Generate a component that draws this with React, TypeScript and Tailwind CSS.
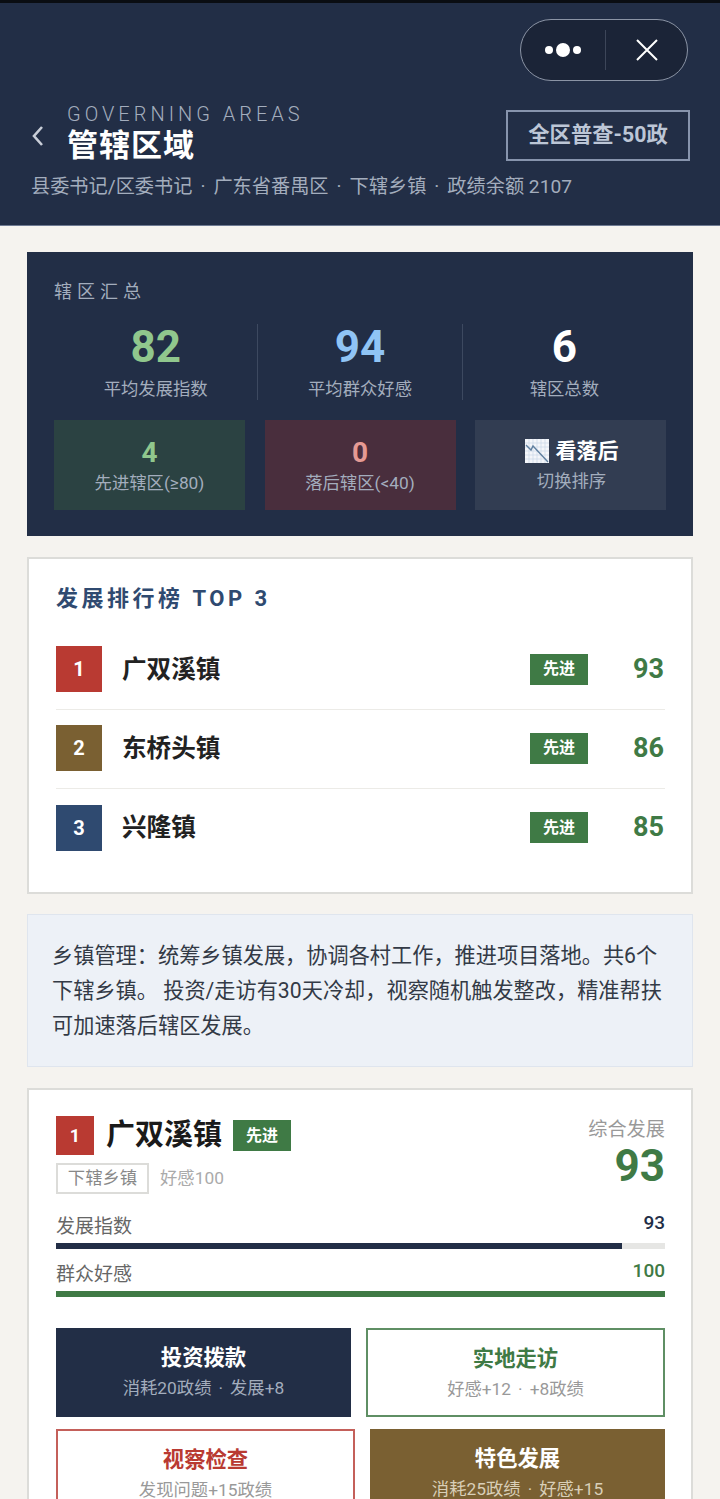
const cjk = "font-['Roboto','Noto_Sans_CJK_SC',sans-serif]";

function Tag() {
  return (
    <span className="flex h-[31px] w-[58px] items-center justify-center bg-[#3f7a45] text-[16px] font-bold text-white">
      先进
    </span>
  );
}

function Sep({ small }: { small?: boolean }) {
  return <span className={small ? "mx-[7px]" : "mx-[8px]"}>·</span>;
}

function RankRow({ n, name, score, color, last }: { n: number; name: string; score: number; color: string; last?: boolean }) {
  return (
    <div className={last ? "flex h-[79px] items-center pb-[2px]" : "flex h-[79px] items-center border-b border-[#ecebe7] pb-[2px]"}>
      <span className={`flex h-[46px] w-[46px] items-center justify-center text-[20px] font-bold text-white ${color}`}>{n}</span>
      <span className="ml-[20px] mt-[2px] flex-1 text-[24.6px] font-bold leading-none text-[#222]">{name}</span>
      <Tag />
      <span className="w-[77px] pr-[1px] text-right text-[27px] font-bold leading-none text-[#3f7a45]">{score}</span>
    </div>
  );
}

function Stat({ value, label, color, border }: { value: number; label: string; color: string; border?: boolean }) {
  return (
    <div className={border ? "flex h-[76px] flex-1 flex-col items-center border-r border-[#3d4960]" : "flex h-[76px] flex-1 flex-col items-center"}>
      <span className={`text-[44px] font-bold leading-[46px] ${color}`}>{value}</span>
      <span className="mt-[7px] text-[17.33px] leading-[24px] text-[#a3adbd]">{label}</span>
    </div>
  );
}

function Bar({ label, value, pct, bar, text }: { label: string; value: number; pct: string; bar: string; text: string }) {
  return (
    <div>
      <div className="flex h-[32px] items-center justify-between">
        <span className="mt-[2px] text-[19px] leading-none text-[#666]">{label}</span>
        <span className={`mb-[6px] text-[19px] font-medium leading-none ${text}`}>{value}</span>
      </div>
      <div className="mt-[2px] h-[6px] bg-[#e6e6e4]">
        <div className={`h-full ${bar} ${pct}`} />
      </div>
    </div>
  );
}

function Action({ title, sub, box, titleColor, subColor }: { title: string; sub: React.ReactNode; box: string; titleColor: string; subColor: string }) {
  return (
    <div className={`flex flex-col items-center justify-center ${box}`}>
      <span className={`text-[21.33px] font-bold leading-[28px] ${titleColor}`}>{title}</span>
      <span className={`mt-[4px] text-[17.33px] leading-[24px] ${subColor}`}>{sub}</span>
    </div>
  );
}

export default function App() {
  return (
    <div className={`h-[1499px] w-[720px] overflow-hidden bg-[#f5f3ef] ${cjk}`}>
      <header className="h-[226px] border-t-[3px] border-t-[#0a0d12] border-b border-b-[#6e7a92] bg-[#222e46] pr-[30px] pl-[32px] pt-[16px]">
        <div className="flex justify-end">
          <div className="mr-[2px] flex h-[62px] w-[168px] items-center rounded-full border border-[#8b94a5] bg-[#1b2437]">
            <div className="flex h-full w-[84px] items-center justify-center gap-[3px]">
              <span className="h-[8px] w-[8px] rounded-full bg-white" />
              <span className="h-[14px] w-[14px] rounded-full bg-white" />
              <span className="h-[8px] w-[8px] rounded-full bg-white" />
            </div>
            <span className="h-[40px] w-px bg-[#3d4659]" />
            <div className="flex flex-1 items-center justify-center">
              <svg width="24" height="24" viewBox="0 0 24 24" fill="none" stroke="white" strokeWidth="2"><path d="M2 2 L22 22 M22 2 L2 22" /></svg>
            </div>
          </div>
        </div>
        <div className="mt-[21px] flex items-center">
          <svg width="14" height="22" viewBox="0 0 14 22" fill="none" stroke="#c9ced8" strokeWidth="2.6" className="ml-[-2px] mt-[6px]"><path d="M12 2 L4 11 L12 20" /></svg>
          <div className="ml-[23px] flex-1">
            <div className="text-[20px] font-light leading-[24px] tracking-[4px] text-[#a3adbd]">GOVERNING AREAS</div>
            <div className="mt-[2px] text-[31px] font-bold leading-[36px] tracking-[1px] text-white">管辖区域</div>
          </div>
          <div className="mt-[4px] flex h-[51px] w-[184px] items-center justify-center border-2 border-[#8794ad] text-[21.33px] font-bold text-[#bcc6d6]">全区普查-50政</div>
        </div>
        <div className="ml-[-1px] mt-[10px] text-[19.2px] leading-[26px] text-[#a3adbd]">县委书记/区委书记<Sep />广东省番禺区<Sep />下辖乡镇<Sep />政绩余额 2107</div>
      </header>

      <main className="flex flex-col px-[27px] pt-[26px]">
        <section className="h-[284px] bg-[#222e46] px-[27px] pt-[27px]">
          <div className="text-[18px] leading-[26px] tracking-[5px] text-[#a3adbd]">辖区汇总</div>
          <div className="mt-[19px] flex">
            <Stat value={82} label="平均发展指数" color="text-[#90c78d]" border />
            <Stat value={94} label="平均群众好感" color="text-[#90c4f5]" border />
            <Stat value={6} label="辖区总数" color="text-white" />
          </div>
          <div className="mt-[20px] flex justify-between">
            <div className="flex h-[90px] w-[191px] flex-col items-center bg-[#2b4242] pt-[16px]">
              <span className="text-[28px] font-bold leading-[34px] text-[#90c78d]">4</span>
              <span className="text-[17.33px] leading-[26px] text-[#a3adbd]">先进辖区(≥80)</span>
            </div>
            <div className="flex h-[90px] w-[191px] flex-col items-center bg-[#492e3d] pt-[16px]">
              <span className="text-[28px] font-bold leading-[34px] text-[#e59a94]">0</span>
              <span className="text-[17.33px] leading-[26px] text-[#a3adbd]">落后辖区(&lt;40)</span>
            </div>
            <div className="flex h-[90px] w-[191px] flex-col items-center bg-[#323d52] pl-[2px] pt-[15px]">
              <span className="flex items-center gap-[7px] text-[21px] font-bold leading-[32px] text-white">
                <svg width="24" height="24" viewBox="0 0 24 24">
                  <rect width="24" height="24" fill="#f4f6fa" />
                  <path d="M0 4H24M0 8H24M0 12H24M0 16H24M0 20H24M4 0V24M8 0V24M12 0V24M16 0V24M20 0V24" stroke="#c5d3e6" strokeWidth="0.6" />
                  <path d="M1 6 L6 11 L8 7 L23 23" stroke="#5f7f9f" strokeWidth="1.4" fill="none" />
                </svg>
                看落后
              </span>
              <span className="mt-[1px] text-[17.33px] leading-[26px] text-[#a3adbd]">切换排序</span>
            </div>
          </div>
        </section>

        <section className="mt-[21px] h-[337px] border-2 border-[#dcdcd9] bg-white pr-[26px] pl-[27px] pt-[26px]">
          <div className="text-[22px] font-bold leading-[28px] tracking-[3.5px] text-[#2f4a70]">发展排行榜 TOP 3</div>
          <div className="mt-[18px]">
            <RankRow n={1} name="广双溪镇" score={93} color="bg-[#b93a32]" />
            <RankRow n={2} name="东桥头镇" score={86} color="bg-[#7a6032]" />
            <RankRow n={3} name="兴隆镇" score={85} color="bg-[#2f4a70]" last />
          </div>
        </section>

        <section className="mt-[20px] h-[153px] border border-[#dfe5ee] bg-[#edf1f7] px-[25px] pt-[23px] text-[21.2px] leading-[35px] text-[#333a46]">
          <div className="ml-[-1px]">乡镇管理：统筹乡镇发展，协调各村工作，推进项目落地。共6个下辖乡镇。 投资/走访有30天冷却，视察随机触发整改，精准帮扶可加速落后辖区发展。</div>
        </section>

        <section className="mt-[21px] border-2 border-[#dcdcd9] bg-white pr-[26px] pl-[27px] pt-[26px] pb-[20px]">
          <div className="flex items-start justify-between">
            <div>
              <div className="flex items-center">
                <span className="flex h-[39px] w-[38px] items-center justify-center bg-[#b93a32] text-[18px] font-bold text-white">1</span>
                <span className="ml-[12px] text-[29px] font-bold leading-none text-[#1a1a1a]">广双溪镇</span>
                <span className="ml-[11px]"><Tag /></span>
              </div>
              <div className="mt-[8px] flex items-center">
                <span className="flex h-[31px] w-[93px] items-center justify-center border-2 border-[#dcdcd9] text-[17.33px] text-[#888]">下辖乡镇</span>
                <span className="ml-[11px] text-[17.33px] text-[#aaa]">好感100</span>
              </div>
            </div>
            <div className="flex flex-col items-end">
              <span className="text-[19.2px] leading-[28px] text-[#999]">综合发展</span>
              <span className="text-[44px] font-bold leading-[44px] text-[#3f7a45]">93</span>
            </div>
          </div>
          <div className="mt-[15px]">
            <Bar label="发展指数" value={93} pct="w-[93%]" bar="bg-[#222e46]" text="text-[#222e46]" />
          </div>
          <div className="mt-[8px]">
            <Bar label="群众好感" value={100} pct="w-full" bar="bg-[#3f7a45]" text="text-[#3f7a45]" />
          </div>
          <div className="mt-[31px] flex justify-between">
            <Action title="投资拨款" sub={<>消耗20政绩<Sep small />发展+8</>} box="h-[89px] w-[295px] bg-[#222e46] pb-[2px]" titleColor="text-white" subColor="text-[#a3adbd]" />
            <Action title="实地走访" sub={<>好感+12<Sep small />+8政绩</>} box="h-[89px] w-[299px] border-2 border-[#5f8f64] bg-white" titleColor="text-[#3f7a45]" subColor="text-[#999]" />
          </div>
          <div className="mt-[12px] flex justify-between">
            <Action title="视察检查" sub="发现问题+15政绩" box="h-[89px] w-[299px] border-2 border-[#c4605a] bg-white" titleColor="text-[#b93a32]" subColor="text-[#999]" />
            <Action title="特色发展" sub={<>消耗25政绩<Sep small />好感+15</>} box="h-[89px] w-[295px] bg-[#7a6032] pb-[2px]" titleColor="text-white" subColor="text-[#d9cfb8]" />
          </div>
        </section>
      </main>
    </div>
  );
}
